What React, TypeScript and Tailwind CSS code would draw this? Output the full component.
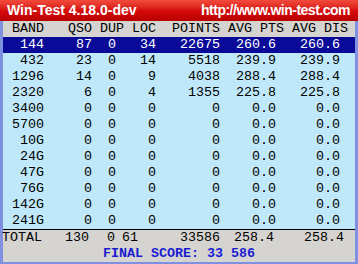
const rows = [
  ['144', '87', '0', '34', '22675', '260.6', '260.6'],
  ['432', '23', '0', '14', '5518', '239.9', '239.9'],
  ['1296', '14', '0', '9', '4038', '288.4', '288.4'],
  ['2320', '6', '0', '4', '1355', '225.8', '225.8'],
  ['3400', '0', '0', '0', '0', '0.0', '0.0'],
  ['5700', '0', '0', '0', '0', '0.0', '0.0'],
  ['10G', '0', '0', '0', '0', '0.0', '0.0'],
  ['24G', '0', '0', '0', '0', '0.0', '0.0'],
  ['47G', '0', '0', '0', '0', '0.0', '0.0'],
  ['76G', '0', '0', '0', '0', '0.0', '0.0'],
  ['142G', '0', '0', '0', '0', '0.0', '0.0'],
  ['241G', '0', '0', '0', '0', '0.0', '0.0'],
];

const totals = ['130', '0', '61', '33586', '258.4', '258.4'];

export default function App() {
  return (
    <div className="w-[358px] h-[264px] flex flex-col overflow-hidden bg-[#bfe9fb]">
      {/* title bar */}
      <div className="h-[21px] shrink-0 flex items-center justify-between pl-[7px] pr-[8px] bg-gradient-to-b from-[#f24a3c] via-[#d60c0c] to-[#b80000] text-white font-bold font-[family-name:'Liberation_Sans',Arial,sans-serif]">
        <span className="text-[14px]">Win-Test 4.18.0-dev</span>
        <span className="text-[14px] tracking-[-0.5px]">http://www.win-test.com</span>
      </div>

      <div className="flex-1 flex flex-col border-x-[3px] border-b-[2px] border-[#7f90e0] font-mono text-[13.33px] leading-[16px] text-black">
        {/* header */}
        <div className="h-[16px] bg-[#d6d4d0] pl-[9px] whitespace-pre">
          BAND   QSO DUP LOC  POINTS AVG PTS AVG DIS
        </div>

        {/* bands */}
        <div className="flex flex-col">
          {rows.map((r, i) => (
            <div
              key={r[0]}
              className={`h-[16px] pl-[9px] grid grid-cols-[32px_48px_24px_40px_64px_56px_64px] text-right ${
                i === 0 ? 'bg-[#0a0a98] text-white' : ''
              }`}
            >
              {r.map((v, j) => (
                <span key={j}>{v}</span>
              ))}
            </div>
          ))}
        </div>

        {/* totals */}
        <div className="flex-1 flex flex-col bg-[#d6d4d0] border-t border-black">
          <div className="h-[16px] flex">
            <span className="w-[45px] pl-[0px] -ml-[1px]">TOTAL</span>
            <div className="grid grid-cols-[42px_26px_23px_82px_54px_70px] text-right">
              {totals.map((v, j) => (
                <span key={j}>{v}</span>
              ))}
            </div>
          </div>
          <div className="h-[16px] text-center font-bold text-[#1c1cd0]">
            FINAL SCORE: 33 586
          </div>
        </div>
      </div>
    </div>
  );
}
